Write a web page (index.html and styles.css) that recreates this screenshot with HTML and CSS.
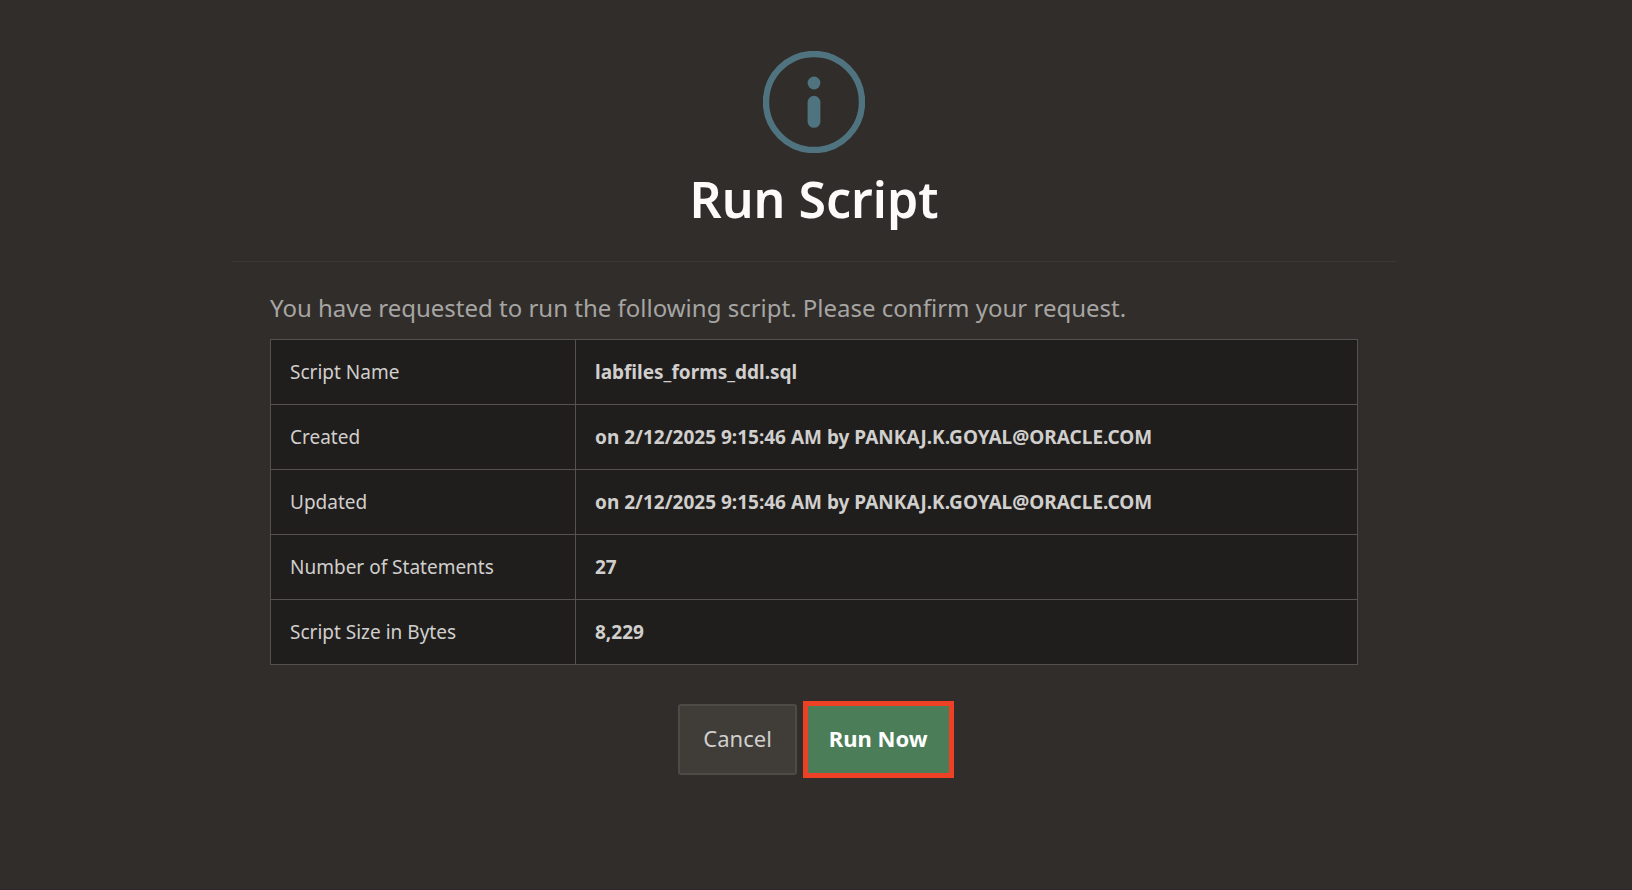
FILE: index.html
```html
<!DOCTYPE html>
<html lang="en">
<head>
<meta charset="utf-8">
<title>Run Script</title>
<link rel="stylesheet" href="styles.css">
</head>
<body>
<main class="wizard">
  <header class="wizard-header">
    <svg class="info-icon" viewBox="0 0 102 102" aria-hidden="true">
      <circle cx="51" cy="51" r="48" fill="none" stroke="currentColor" stroke-width="6.4"/>
      <circle cx="51" cy="32" r="6.4" fill="currentColor"/>
      <rect x="44.6" y="44.8" width="12.8" height="32" rx="6.4" fill="currentColor"/>
    </svg>
    <h1 class="title">Run Script</h1>
  </header>
  <section class="wizard-body">
    <p class="message">You have requested to run the following script. Please confirm your request.</p>
    <table class="details">
      <tbody>
        <tr><th scope="row">Script Name</th><td>labfiles_forms_ddl.sql</td></tr>
        <tr><th scope="row">Created</th><td>on 2/12/2025 9:15:46 AM by PANKAJ.K.GOYAL@ORACLE.COM</td></tr>
        <tr><th scope="row">Updated</th><td>on 2/12/2025 9:15:46 AM by PANKAJ.K.GOYAL@ORACLE.COM</td></tr>
        <tr><th scope="row">Number of Statements</th><td>27</td></tr>
        <tr><th scope="row">Script Size in Bytes</th><td>8,229</td></tr>
      </tbody>
    </table>
    <div class="actions">
      <button type="button" class="button">Cancel</button>
      <button type="button" class="button button-hot">Run Now</button>
    </div>
  </section>
</main>
</body>
</html>
```
FILE: styles.css
```css
* { box-sizing: border-box; }

body {
  margin: 0;
  min-height: 100vh;
  padding: 51px 4px 0 0;
  background: #312d2a;
  border-bottom: 1px solid #2b2528;
  color: #d0cfcd;
  font-family: "Noto Sans", "Open Sans", sans-serif;
  font-size: 19px;
}

.wizard {
  max-width: 1164px;
  margin: 0 auto;
}

.wizard-header {
  display: flex;
  flex-direction: column;
  align-items: center;
  gap: 10px;
  padding-bottom: 26px;
  border-bottom: 1px solid #3c3835;
}

.info-icon {
  width: 102px;
  height: 102px;
  color: #4f7480;
}

.title {
  margin: 0;
  color: #fcfbfa;
  font-size: 50px;
  font-weight: 600;
  line-height: 72px;
}

.wizard-body { padding: 28px 38px; }

.message {
  margin: 0 0 13px;
  color: #a6a5a3;
  font-size: 24px;
  line-height: 36px;
}

.details {
  width: 100%;
  border-collapse: collapse;
  background: #201e1c;
}

.details th,
.details td {
  height: 65px;
  padding: 0 19px 1px;
  border: 1px solid #55514e;
  line-height: 28px;
  text-align: left;
}

.details th {
  width: 305px;
  font-weight: 400;
}

.details td { font-weight: 700; }

.actions {
  display: flex;
  justify-content: center;
  align-items: center;
  gap: 6px;
  margin: 36px 0 0 4px;
}

.button {
  height: 71px;
  padding: 0 23px 4px;
  border: 2px solid #4e4b47;
  border-radius: 3px;
  background: #403c38;
  color: #d0cfcd;
  font: 400 22px/32px "Noto Sans", "Open Sans", sans-serif;
}

.button-hot {
  height: 77px;
  padding: 0 21px 4px;
  border: 5px solid #ec4125;
  border-radius: 0;
  background: #4b7e58;
  color: #fff;
  font-weight: 700;
}
```
